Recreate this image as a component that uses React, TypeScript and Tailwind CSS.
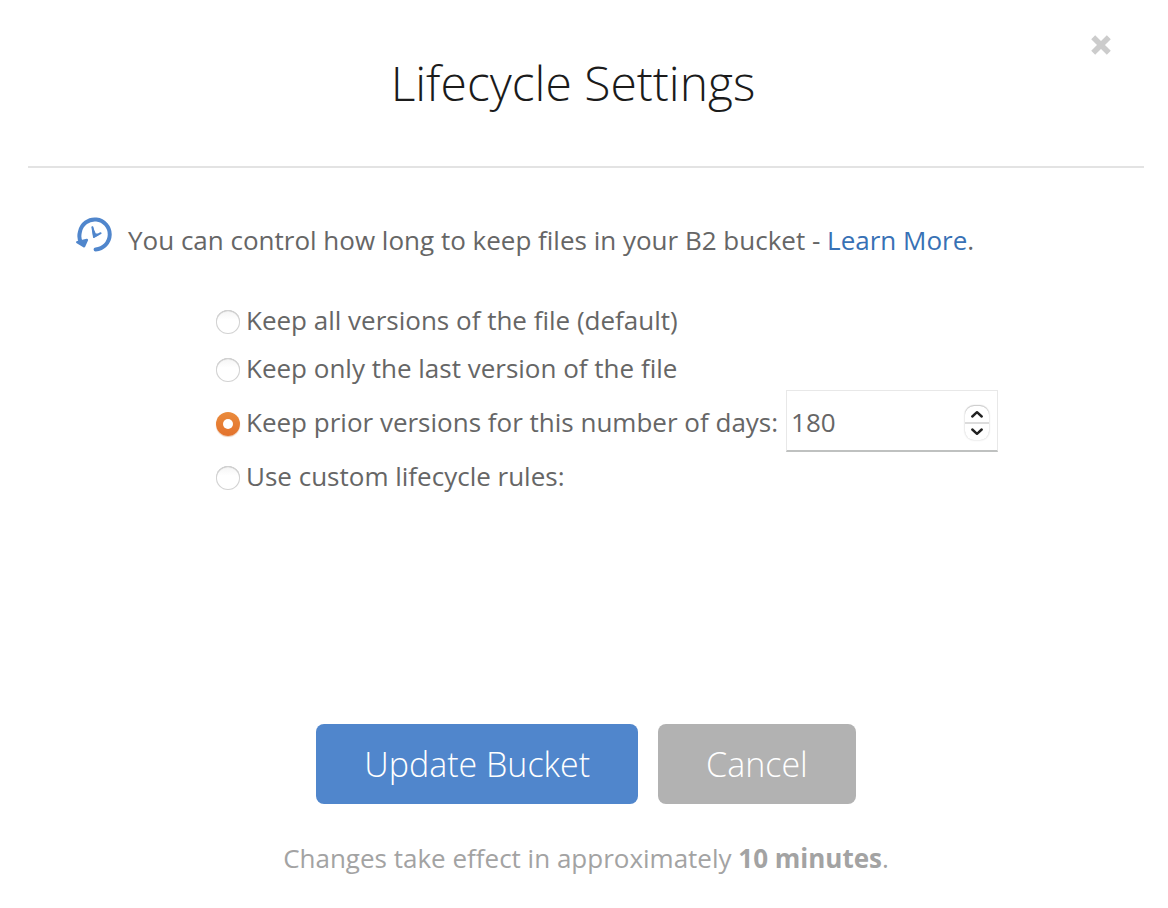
import { useState } from "react";
import type { ReactNode } from "react";

type Mode = "all" | "last" | "days" | "custom";

function HistoryIcon() {
  return (
    <svg viewBox="0 0 36 36" className="mt-px size-9 shrink-0" fill="none" stroke="#5086cc" aria-hidden="true">
      <path d="M5.2 26C3.2 22.8 2.9 18.8 4 14.6A15 15 0 1 1 19.6 32.4" strokeWidth="4" strokeLinecap="round" />
      <path d="M1.4 25.2 10.8 23 8 29.2Z" fill="#5086cc" strokeWidth="2.6" strokeLinejoin="round" />
      <path d="M16.4 10.2 18 20 24.6 16.2" strokeWidth="2" strokeLinecap="round" strokeLinejoin="round" />
      <path d="M16.4 10.2 17.8 20 22.4 17.4 19.2 16.8Z" fill="#5086cc" strokeWidth="1.2" strokeLinejoin="round" />
    </svg>
  );
}

function RadioOption(props: { value: Mode; selected: Mode; onSelect: (m: Mode) => void; children: ReactNode }) {
  const { value, selected, onSelect, children } = props;
  return (
    <label className="flex items-center gap-1.5">
      <input
        type="radio"
        name="lifecycle"
        value={value}
        checked={selected === value}
        onChange={() => onSelect(value)}
        className="mt-1 grid size-6 shrink-0 appearance-none place-items-center rounded-full bg-gradient-to-b from-[#f4f4f4] to-white to-40% shadow-[inset_0_0_0_1px_#d2d2d2,inset_0_1px_1px_#b5b5b5] before:size-[10px] before:rounded-full checked:from-[#ea8b3c] checked:to-[#e3722c] checked:to-100% checked:shadow-[0_1px_1px_#e9c9b0] checked:before:bg-white"
      />
      <span>{children}</span>
    </label>
  );
}

export default function App() {
  const [mode, setMode] = useState<Mode>("days");
  const [days, setDays] = useState(180);

  return (
    <main className="bg-white pr-6 pl-7 font-['Open_Sans',sans-serif] text-[26px] leading-9 text-[#666]">
      <header className="relative border-b-2 border-[#e3e3e3] pt-12 pr-[26px] pb-12">
        <h1 className="text-center text-5xl leading-[70px] font-light text-[#1b1b1b]">Lifecycle Settings</h1>
        <button type="button" aria-label="Close" className="absolute top-[35px] right-[33px]">
          <svg viewBox="0 0 20 20" className="size-5" stroke="#ccc" strokeWidth="5.6" aria-hidden="true">
            <path d="M2.2 2.2 17.8 17.8M17.8 2.2 2.2 17.8" />
          </svg>
        </button>
      </header>

      <section className="flex items-start gap-4 px-12 pt-12">
        <HistoryIcon />
        <p className="mt-1.5">
          You can control how long to keep files in your B2 bucket -{" "}
          <a href="#learn-more" className="text-[#3871b5]">Learn More</a>.
        </p>
      </section>

      <fieldset aria-label="File versions" className="flex flex-col items-start pt-11 pl-47">
        <RadioOption value="all" selected={mode} onSelect={setMode}>Keep all versions of the file (default)</RadioOption>
        <div className="mt-3">
          <RadioOption value="last" selected={mode} onSelect={setMode}>Keep only the last version of the file</RadioOption>
        </div>
        <div className="mt-1 flex items-center gap-2">
          <div className="mt-0.5">
            <RadioOption value="days" selected={mode} onSelect={setMode}>Keep prior versions for this number of days:</RadioOption>
          </div>
          <div className="flex h-[62px] w-[212px] items-center border border-b-2 border-[#e8e8e8] border-b-[#bfc1c0] pt-0.5 pr-2 pl-1">
            <input
              type="number"
              aria-label="Number of days"
              value={days}
              onChange={(e) => setDays(Number(e.target.value))}
              className="min-w-0 flex-1 appearance-none outline-none [-moz-appearance:textfield] [&::-webkit-inner-spin-button]:appearance-none"
            />
            <div className="mt-0.5 flex w-6 flex-col divide-y-2 divide-[#dcdcdc] overflow-hidden rounded-[9px] shadow-[0_0_2px_#c8c8c8,0_-1px_1px_#ccc]">
              <button type="button" aria-label="Increase days" onClick={() => setDays(days + 1)} className="grid h-[18px] place-items-center">
                <svg viewBox="0 0 12 8" className="h-2 w-3" fill="none" stroke="#222" strokeWidth="2.4" strokeLinecap="round" strokeLinejoin="round"><path d="M1.3 6.5 6 2.2 10.7 6.5" /></svg>
              </button>
              <button type="button" aria-label="Decrease days" onClick={() => setDays(days - 1)} className="grid h-4 place-items-center">
                <svg viewBox="0 0 12 8" className="h-2 w-3" fill="none" stroke="#222" strokeWidth="2.4" strokeLinecap="round" strokeLinejoin="round"><path d="M1.3 1.5 6 5.8 10.7 1.5" /></svg>
              </button>
            </div>
          </div>
        </div>
        <div className="mt-1.5">
          <RadioOption value="custom" selected={mode} onSelect={setMode}>Use custom lifecycle rules:</RadioOption>
        </div>
      </fieldset>

      <footer className="flex flex-col items-center gap-9 pt-[230px] pb-8">
        <div className="flex gap-5 text-[34px] font-light text-white">
          <button type="button" className="h-20 rounded-lg bg-[#5086cc] px-12">Update Bucket</button>
          <button type="button" className="h-20 rounded-lg bg-[#b2b2b2] px-12">Cancel</button>
        </div>
        <p className="text-[#a3a3a3]">
          Changes take effect in approximately <strong className="font-bold">10 minutes</strong>.
        </p>
      </footer>
    </main>
  );
}
